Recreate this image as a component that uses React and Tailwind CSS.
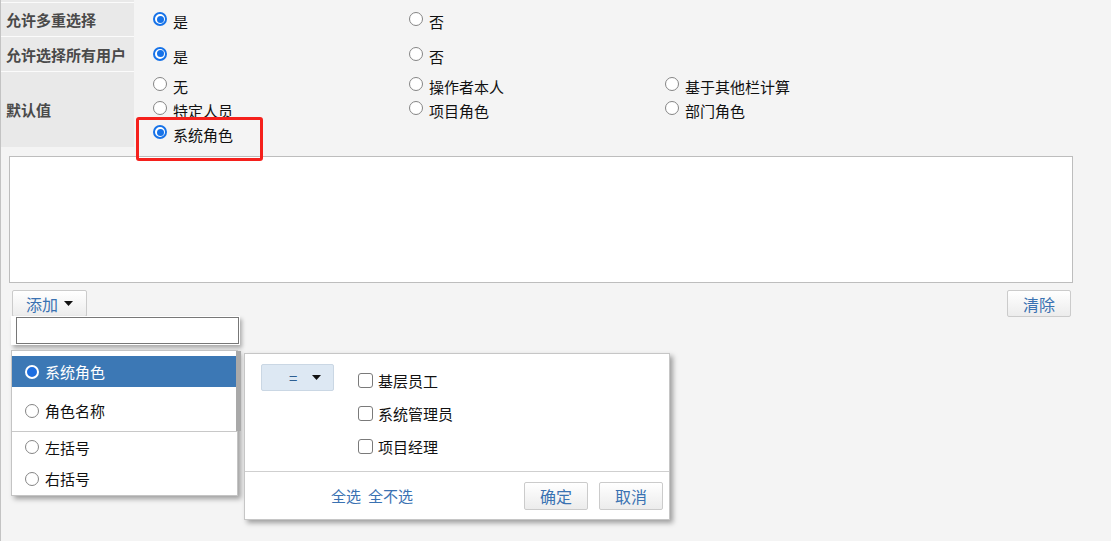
import React from "react";

const Radio = ({ checked }) =>
  checked ? (
    <span className="w-[14px] h-[14px] rounded-full border-2 border-[#1672e8] bg-white flex items-center justify-center shrink-0">
      <span className="w-[7px] h-[7px] rounded-full bg-[#1672e8]" />
    </span>
  ) : (
    <span className="w-[14px] h-[14px] rounded-full border border-[#858585] bg-white shrink-0" />
  );

const Opt = ({ checked, children, w = "w-[256px]" }) => (
  <div className={`flex items-center ${w}`}>
    <Radio checked={checked} />
    <span className="ml-[6px] pt-[5px] text-[15px] leading-none text-[#111]">{children}</span>
  </div>
);

const Btn = ({ children, className = "" }) => (
  <div
    className={`flex items-center justify-center h-[27px] rounded-[2px] border border-[#cbcbcb] bg-gradient-to-b from-white to-[#ececec] text-[16px] leading-none text-[#3a72b2] ${className}`}
  >
    {children}
  </div>
);

const Caret = () => (
  <svg width="9" height="5" viewBox="0 0 9 5" className="shrink-0">
    <path d="M0 0H9L4.5 5Z" fill="#111" />
  </svg>
);

export default function App() {
  return (
    <div className="relative w-[1111px] h-[541px] overflow-hidden bg-[#f4f4f4] border-l border-[#c3c3c3] font-['Noto_Sans_CJK_SC','Noto_Sans',sans-serif]">
      {/* partial row above */}
      <div className="flex h-[2px]">
        <div className="w-[133px] bg-[#e9e9e9]" />
      </div>
      {/* row 1 */}
      <div className="flex">
        <div className="w-[133px] h-[34px] border-t border-[#fbfbfb] bg-[#e9e9e9] flex items-center pl-[5px] text-[15px] font-bold text-[#4a4a4a] leading-none">
          允许多重选择
        </div>
        <div className="h-[34px] flex items-center pl-[19px]">
          <Opt checked>是</Opt>
          <Opt>否</Opt>
        </div>
      </div>
      {/* row 2 */}
      <div className="flex">
        <div className="w-[133px] h-[35px] border-t border-[#fbfbfb] bg-[#e9e9e9] flex items-center pl-[5px] text-[15px] font-bold text-[#4a4a4a] leading-none">
          允许选择所有用户
        </div>
        <div className="h-[35px] flex items-center pl-[19px]">
          <Opt checked>是</Opt>
          <Opt>否</Opt>
        </div>
      </div>
      {/* row 3 */}
      <div className="flex">
        <div className="w-[133px] h-[76px] border-t border-[#fbfbfb] bg-[#e9e9e9] flex items-center pl-[5px] text-[15px] font-bold text-[#4a4a4a] leading-none">
          默认值
        </div>
        <div className="pl-[19px] pt-[1px]">
          <div className="flex h-[24px] items-center">
            <Opt>无</Opt>
            <Opt>操作者本人</Opt>
            <Opt>基于其他栏计算</Opt>
          </div>
          <div className="flex h-[24px] items-center">
            <Opt>特定人员</Opt>
            <Opt>项目角色</Opt>
            <Opt>部门角色</Opt>
          </div>
          <div className="flex h-[24px] items-center">
            <Opt checked>系统角色</Opt>
          </div>
        </div>
      </div>

      {/* textarea */}
      <div className="ml-[8px] mt-[9px] w-[1064px] h-[127px] bg-white border border-[#bdbdbd]" />

      {/* buttons row */}
      <div className="ml-[11px] mt-[7px] w-[1059px] flex justify-between items-start">
        <Btn className="w-[75px] gap-[6px]">
          <span>添加</span>
          <Caret />
        </Btn>
        <Btn className="w-[64px]">清除</Btn>
      </div>

      {/* annotation box */}
      <div className="absolute left-[135px] top-[117px] w-[127px] h-[44px] border-[3px] border-[#f5201c] rounded-[3px]" />

      {/* search popover */}
      <div className="absolute left-[10px] top-[316px] w-[229px] h-[29px] bg-white shadow-[2px_3px_4px_rgba(0,0,0,0.3)] pt-[1px] pl-[5px]">
        <div className="w-[223px] h-[27px] border border-[#777] bg-white" />
      </div>

      {/* list popover */}
      <div className="absolute left-[10px] top-[350px] w-[227px] h-[146px] bg-white border border-[#c4c4c4] shadow-[3px_3px_5px_rgba(0,0,0,0.35)] text-[15px] leading-none">
        <div className="flex h-[81px] border-b border-[#c8c8c8]">
          <div className="flex-1 pt-[5px]">
            <div className="h-[31px] bg-[#3c78b5] flex items-center pl-[13px] text-white">
              <span className="w-[14px] h-[14px] rounded-full border-2 border-white bg-[#1d6ee0] shrink-0" />
              <span className="ml-[6px]">系统角色</span>
            </div>
            <div className="h-[31px] mt-[8px] flex items-center pl-[13px] text-[#111]">
              <Radio />
              <span className="ml-[6px]">角色名称</span>
            </div>
          </div>
          <div className="w-[5px] mr-[-4px] bg-[#a9a9a9]" />
        </div>
        <div className="h-[30px] flex items-center pl-[13px] text-[#111]">
          <Radio />
          <span className="ml-[6px]">左括号</span>
        </div>
        <div className="h-[33px] flex items-center pl-[13px] text-[#111]">
          <Radio />
          <span className="ml-[6px]">右括号</span>
        </div>
      </div>

      {/* condition panel */}
      <div className="absolute left-[243px] top-[353px] w-[426px] h-[167px] bg-white border border-[#c6c6c6] shadow-[3px_3px_5px_rgba(0,0,0,0.35)] flex flex-col">
        <div className="flex pt-[10px] pl-[16px] h-[118px] border-b border-[#cfcfcf]">
          <div className="w-[73px] h-[27px] rounded-[2px] bg-[#dde8f3] border border-[#cad7e4] flex items-center pl-[27px] gap-[15px]">
            <span className="text-[15px] leading-none text-[#2d5e91]">=</span>
            <Caret />
          </div>
          <div className="ml-[24px] flex flex-col text-[15px] leading-none text-[#111]">
            {["基层员工", "系统管理员", "项目经理"].map((t) => (
              <div key={t} className="h-[33px] flex items-center">
                <span className="w-[15px] h-[15px] rounded-[3px] border border-[#7a7a7a] bg-white shrink-0" />
                <span className="ml-[5px]">{t}</span>
              </div>
            ))}
          </div>
        </div>
        <div className="flex-1 flex items-center pl-[86px] pr-[6px]">
          <span className="text-[15px] leading-none text-[#3a72b2]">全选</span>
          <span className="ml-[7px] text-[15px] leading-none text-[#3a72b2]">全不选</span>
          <div className="ml-auto flex gap-[11px]">
            <Btn className="w-[64px] h-[28px]">确定</Btn>
            <Btn className="w-[64px] h-[28px]">取消</Btn>
          </div>
        </div>
      </div>
    </div>
  );
}
